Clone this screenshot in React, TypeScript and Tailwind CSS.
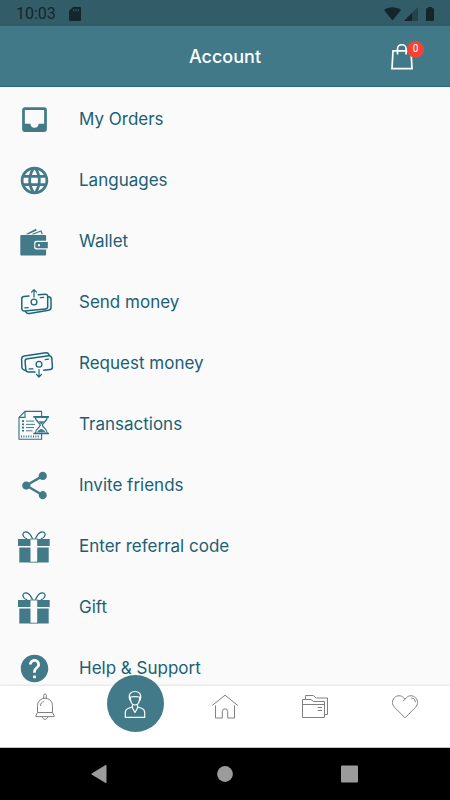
import type { ReactNode } from "react";
import { MdHelp, MdInbox, MdLanguage, MdShare } from "react-icons/md";

const WalletIcon = () => (
  <svg viewBox="0 0 40 40" className="size-10" fill="none" aria-hidden="true">
    <path d="M11.5 12.300 21.800 6.800l1 1.700L14.500 12.300z" fill="#427a8a" />
    <path d="M18.500 12.300 27 9l1.300 3.300" stroke="#427a8a" strokeWidth="1.200" />
    <rect x="6.300" y="13" width="25.800" height="20.500" rx="1" fill="#427a8a" />
    <path d="M33 18.800H22.200a2 2 0 0 0-2 2v4.700a2 2 0 0 0 2 2H33z" fill="#fafafa" />
    <path
      d="M33.800 20H23a1.700 1.700 0 0 0-1.700 1.700v2.900A1.700 1.700 0 0 0 23 26.300h10.800z"
      fill="#427a8a"
    />
    <rect x="24" y="22" width="2" height="2.400" rx="1" fill="#fafafa" />
  </svg>
);

const SendMoneyIcon = () => (
  <svg
    viewBox="0 0 40 40"
    className="size-10"
    fill="none"
    stroke="#1b6679"
    strokeWidth="1.500"
    strokeLinecap="round"
    strokeLinejoin="round"
    aria-hidden="true"
  >
    <path d="M15 12.900 9.800 13.600a2.400 2.400 0 0 0-2 2.600v9.600a2.400 2.400 0 0 0 2.700 2.300l21-2.100a2.400 2.400 0 0 0 2.200-2.400V13.400a2.200 2.200 0 0 0-2.400-2.200l-7 .5" />
    <path d="M34 13.800c2 0 3 .8 3 2.400v8.400c0 1.600-.8 2.500-2.400 2.700l-19 3.200c-2 .3-3.300-.2-3.900-1.800" />
    <circle cx="20" cy="19" r="2.900" strokeWidth="1.300" />
    <path d="M20 14V6.800M17.500 9.200 20 6.700l2.500 2.500" strokeWidth="1.200" />
    <path d="M26.300 14.700 29.700 14.400M10.800 24.900l3.400-.3" strokeWidth="1.200" />
  </svg>
);

const RequestMoneyIcon = () => (
  <svg
    viewBox="0 0 40 40"
    className="size-10"
    fill="none"
    stroke="#1b6679"
    strokeWidth="1.500"
    strokeLinecap="round"
    strokeLinejoin="round"
    aria-hidden="true"
  >
    <path d="M21 27.900h-6.600a2.600 2.600 0 0 1-2.600-2.400l-.7-8a2.600 2.600 0 0 1 2.300-2.800l21.400-2.900a2.700 2.700 0 0 1 3 2.400l.6 8.500a2.600 2.600 0 0 1-2.300 2.800l-6.300.8" />
    <path d="M11.500 26.400c-2.100-.4-3.400-1.200-3.600-2.900l-.3-8.200c0-1.900.8-2.900 2.600-3.200l21.600-3.300c1.800-.2 2.800.5 3.300 2.400" />
    <circle cx="25" cy="20.300" r="2.900" strokeWidth="1.300" />
    <path d="M25 25.500v7.400M22.600 30.500l2.400 2.500 2.400-2.500" strokeWidth="1.200" />
    <path d="M31.300 15.700 34.400 15.200M15 24.900h4" strokeWidth="1.200" />
  </svg>
);

const TransactionsIcon = () => (
  <svg
    viewBox="0 0 40 40"
    className="size-10"
    fill="none"
    stroke="#2f7183"
    strokeWidth="1.100"
    aria-hidden="true"
  >
    <path d="M27.600 11V6.400H11L5 12.400v21.800h22.600V29" />
    <path d="M11 6.400v6H5" />
    <path d="M8 16.100h2M8 19.400h2M8 22.600h2M8 25.800h2" strokeWidth="1.600" />
    <path d="M12 16.100h8M12 19.400h9M12 22.600h8M12 25.800h6.500" strokeWidth=".9" />
    <path d="M7 31.400h19" strokeWidth="2" strokeDasharray="1 1.400" />
    <path
      d="M21.300 12c0 4.700 4.900 5.700 4.900 8.100s-4.900 3.700-4.900 8.200h12c0-4.500-4.900-5.800-4.900-8.200s4.900-3.400 4.900-8.100z"
      fill="#fafafa"
      strokeWidth="1.300"
    />
    <path
      d="M24.300 16.300h6l-3 3.200zM23.200 27.300c.8-2 2.400-2.600 4.100-3.500 1.700.9 3.300 1.500 4.100 3.500z"
      fill="#427a8a"
      stroke="none"
    />
    <path d="M19.300 11.900H35M19.300 28.500H35" strokeWidth="1.600" />
  </svg>
);

const GiftIcon = () => (
  <svg viewBox="0 0 40 40" className="size-10" fill="none" aria-hidden="true">
    <path
      d="M18.600 11.800C17 8 15 5 12 4.800 9 4.700 8.200 7.500 9.600 9.500c1.100 1.600 2.500 2 3.600 2.500M21.400 11.800C23 8 25 5 28 4.800c3-.1 3.800 2.700 2.400 4.700-1.100 1.600-2.500 2-3.600 2.500"
      stroke="#1b6679"
      strokeWidth="1.200"
    />
    <path d="M4 12h12.500v7H4zM23.200 12h12.500v7H23.200z" fill="#427a8a" />
    <path d="M5.300 20.500h11.200v15H5.300zM23.200 20.500h11.500v15H23.200z" fill="#427a8a" />
    <path d="M16 12h8M16 35.200h8" stroke="#427a8a" strokeWidth=".9" />
  </svg>
);

const BellIcon = () => (
  <svg viewBox="0 0 28 28" className="size-7" fill="none" stroke="currentColor" aria-hidden="true">
    <path d="M12.700 5.500V2.300a1.300 1.300 0 0 1 2.600 0v3.200" />
    <path d="M6.500 19.500V12.500a7.500 7.300 0 0 1 15 0v7" />
    <path d="M6.500 19.500h15l1.700 3.300v.8H4.800v-.8z" strokeLinejoin="round" />
    <path d="M11.200 23.800c.4 1.600 1.400 2.500 2.800 2.500s2.400-.9 2.800-2.500M9.500 13c0-2.500 1.300-4 3.500-4.500" />
  </svg>
);

const UserIcon = () => (
  <svg
    viewBox="0 0 28 28"
    className="size-7"
    fill="none"
    stroke="currentColor"
    strokeWidth="1.200"
    strokeLinejoin="round"
    aria-hidden="true"
  >
    <path d="M9.200 10.500C6.800 5 9.200 1.500 14 1.500s7.200 3.500 4.800 9" />
    <path d="M9.300 7c0 4.500 1.400 8 4.700 8s4.700-3.500 4.700-8c-3.200-.6-6.200-.6-9.400 0z" />
    <path d="M11.500 14.300v2.500L7 18.500c-2 .7-2.700 1.800-2.700 4.200v4.600h19.400v-4.600c0-2.400-.7-3.500-2.700-4.200l-4.500-1.700v-2.500" />
    <path d="m11 17 3 5.500 3-5.500" />
  </svg>
);

const HomeIcon = () => (
  <svg viewBox="0 0 28 28" className="size-7" fill="none" stroke="currentColor" aria-hidden="true">
    <path d="M1.200 12.500 14 2.200l12.800 10.300" />
    <path d="M4.500 12.500V25h6.800v-6.500a2.700 2.700 0 0 1 5.400 0V25h6.800V12.500" />
  </svg>
);

const FoldersIcon = () => (
  <svg viewBox="0 0 28 28" className="size-7" fill="none" stroke="currentColor" aria-hidden="true">
    <path d="M1.500 24.500v-18H10l2.500 2h11v16zM1.500 11.500h22" />
    <path d="M4.500 6.500v-4h7.700l3 2.500h11.300v16.500h-3M16.700 14.500h4.300M16.700 17.500h4.300" />
  </svg>
);

const HeartIcon = () => (
  <svg viewBox="0 0 28 28" className="size-7" fill="none" stroke="currentColor" aria-hidden="true">
    <path d="M14 24.800 3.500 14.300C.8 11.500.8 7.300 3.400 4.700c2.700-2.600 6.700-2.600 9.200 0L14 6.200l1.400-1.500c2.500-2.600 6.500-2.600 9.200 0 2.600 2.600 2.600 6.800-.1 9.600z" />
    <path d="m14 6.200-2 2M20.300 5c2.600.1 4 1.600 4 4.300" />
  </svg>
);

const materialIcon = "size-[33px] text-[#427a8a]";

const menu: { label: string; icon: ReactNode }[] = [
  { label: "My Orders", icon: <MdInbox className={materialIcon} /> },
  { label: "Languages", icon: <MdLanguage className={materialIcon} /> },
  { label: "Wallet", icon: <WalletIcon /> },
  { label: "Send money", icon: <SendMoneyIcon /> },
  { label: "Request money", icon: <RequestMoneyIcon /> },
  { label: "Transactions", icon: <TransactionsIcon /> },
  { label: "Invite friends", icon: <MdShare className={materialIcon} /> },
  { label: "Enter referral code", icon: <GiftIcon /> },
  { label: "Gift", icon: <GiftIcon /> },
  { label: "Help & Support", icon: <MdHelp className={materialIcon} /> },
];

const tabs = [
  { name: "Notifications", icon: <BellIcon /> },
  { name: "Account", icon: <UserIcon />, active: true },
  { name: "Home", icon: <HomeIcon /> },
  { name: "Categories", icon: <FoldersIcon /> },
  { name: "Favorites", icon: <HeartIcon /> },
];

function StatusBar() {
  return (
    <div className="flex h-[26px] shrink-0 items-center bg-[#335c69] px-4 pt-0.5 font-[Roboto,sans-serif] text-base text-[#14262c]">
      <span>10:03</span>
      <svg viewBox="0 0 12 14" className="ml-[13px] h-[14px] w-3" aria-hidden="true">
        <path d="M4 0h7a1 1 0 0 1 1 1v12a1 1 0 0 1-1 1H1a1 1 0 0 1-1-1V4z" fill="currentColor" />
        <path d="M4.700 2v2.500M7 2v2.500M9.300 2v2.500" stroke="#335c69" />
      </svg>
      <svg viewBox="0 0 17 14" className="ml-auto h-[14px] w-[17px]" aria-hidden="true">
        <path d="M8.500 13.500 0 3C4.500-.8 12.500-.8 17 3z" fill="currentColor" />
      </svg>
      <svg viewBox="0 0 14 14" className="ml-[3px] size-[14px]" aria-hidden="true">
        <path d="M14 0v14H0z" fill="currentColor" opacity=".45" />
        <path d="M8 6v8H0z" fill="currentColor" />
      </svg>
      <svg viewBox="0 0 8 14" className="ml-2 h-[14px] w-2" aria-hidden="true">
        <path d="M2 0h4v1.300h2V14H0V1.300h2z" fill="currentColor" />
      </svg>
    </div>
  );
}

function Header() {
  return (
    <header className="grid h-[61px] shrink-0 grid-cols-[1fr_auto_1fr] items-center border-b border-[#246b7e] bg-[#427989] pt-0.5 text-white">
      <h1 className="col-start-2 text-lg font-medium">Account</h1>
      <button type="button" aria-label="Cart" className="relative mr-[37px] justify-self-end">
        <svg
          viewBox="0 0 22 26"
          className="h-[26px] w-[22px]"
          fill="none"
          stroke="currentColor"
          strokeWidth="1.700"
          aria-hidden="true"
        >
          <path d="M2 6.800h18l1 17.800H1z" />
          <path d="M6.500 10.500V5a4.300 4.300 0 0 1 8.600 0v5.500" />
        </svg>
        <span className="absolute -right-[11px] -top-[3px] size-[17px] rounded-full bg-[#f44336] text-center font-[Roboto,sans-serif] text-[10px] leading-[15px]">
          0
        </span>
      </button>
    </header>
  );
}

function TabBar() {
  return (
    <nav className="relative grid h-[62px] shrink-0 grid-cols-5 border-b border-[#c4c4c4] bg-white text-[#808080] shadow-[0_-1px_2px_rgba(0,0,0,0.09)]">
      {tabs.map((tab) => (
        <button
          key={tab.name}
          type="button"
          aria-label={tab.name}
          className="flex items-start justify-center pt-[7px]"
        >
          {tab.active ? (
            <span className="-mt-[18px] flex size-[57px] items-center justify-center rounded-full bg-[#427a8a] text-white">
              {tab.icon}
            </span>
          ) : (
            tab.icon
          )}
        </button>
      ))}
    </nav>
  );
}

function SystemNav() {
  return (
    <div className="flex h-[52px] shrink-0 items-center justify-center gap-[106px] bg-black text-[#9b9b9b]">
      <button type="button" aria-label="Back">
        <svg viewBox="0 0 20 20" className="size-5" fill="currentColor" aria-hidden="true">
          <path d="M17.500 1.500a.6.600 0 0 0-.9-.4l-14 8.500a.5.500 0 0 0 0 .8l14 8.500a.6.600 0 0 0 .9-.4z" />
        </svg>
      </button>
      <button type="button" aria-label="Home screen">
        <svg viewBox="0 0 20 20" className="size-5" fill="currentColor" aria-hidden="true">
          <circle cx="10" cy="10" r="7.900" />
        </svg>
      </button>
      <button type="button" aria-label="Overview">
        <svg viewBox="0 0 20 20" className="size-5" fill="currentColor" aria-hidden="true">
          <rect x="0" y="1.500" width="17" height="17" rx="1" />
        </svg>
      </button>
    </div>
  );
}

export default function App() {
  return (
    <div className="flex h-screen flex-col bg-[#fafafa] font-[Inter,sans-serif]">
      <StatusBar />
      <Header />
      <main className="min-h-0 flex-1 overflow-y-auto pt-0.5 [scrollbar-width:none]">
        <ul>
          {menu.map((item) => (
            <li key={item.label}>
              <a
                href="#"
                className="flex h-[61px] items-center gap-[25px] pl-[14px] text-[17px] text-[#1b6075]"
              >
                <span className="flex w-10 shrink-0 justify-center">{item.icon}</span>
                {item.label}
              </a>
            </li>
          ))}
        </ul>
      </main>
      <TabBar />
      <SystemNav />
    </div>
  );
}
